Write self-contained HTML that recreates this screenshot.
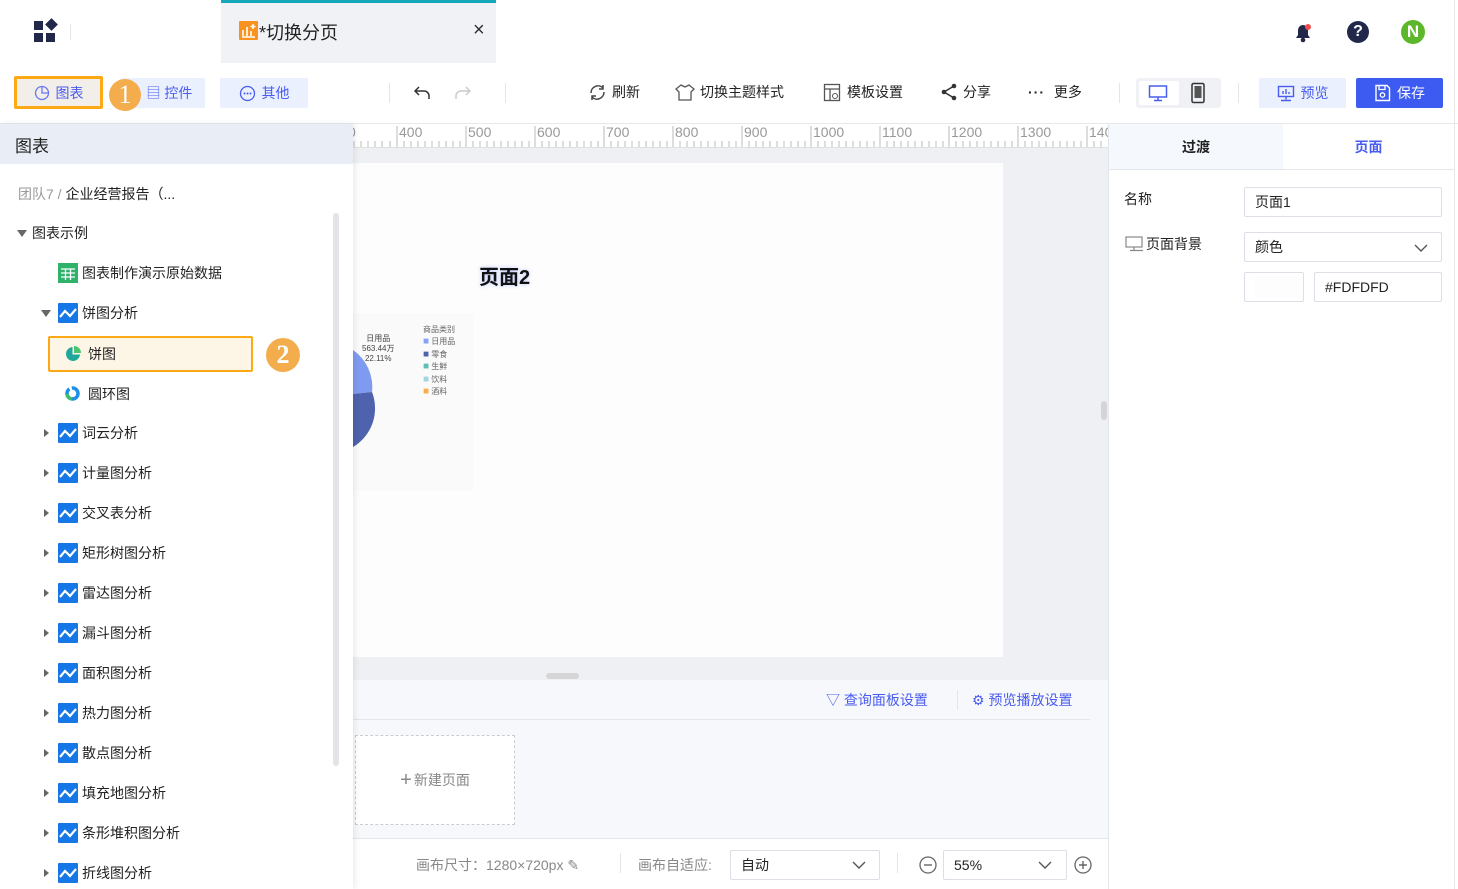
<!DOCTYPE html>
<html><head><meta charset="utf-8"><style>
*{margin:0;padding:0;box-sizing:border-box}
body{width:1458px;height:889px;overflow:hidden;background:#fff;font-family:"Liberation Sans","Noto Sans CJK SC",sans-serif;font-size:14px;color:#222;position:relative}
.a{position:absolute;white-space:nowrap}
.btn{position:absolute;top:78px;height:30px;border-radius:2px;background:#eaf0fe;color:#4a5cf0;font-size:14px;display:flex;align-items:center;justify-content:center;gap:6px;white-space:nowrap}
.tb{position:absolute;top:82px;font-size:14px;color:#222;display:flex;align-items:center;gap:5px;white-space:nowrap}
.row{position:absolute;left:0;width:330px;height:20px;font-size:14px;display:flex;align-items:center;color:#222;white-space:nowrap}
.row span{top:0;line-height:20px}
.tri{width:0;height:0;border-left:5px solid #666;border-top:4px solid transparent;border-bottom:4px solid transparent;position:absolute;left:44px;top:6px}
.wave{width:20px;height:20px;background:#1677e6;border-radius:1px;position:absolute;left:58px;top:0}
.ruler span{position:absolute;top:0;font-size:14px;color:#999}
.inp{position:absolute;border:1px solid #dcdfe6;border-radius:2px;background:#fff;font-size:14px;padding-left:10px;display:flex;align-items:center;white-space:nowrap}
</style></head><body>
<div class="a" style="left:34px;top:21px;width:22px;height:22px">
<div class="a" style="left:0;top:0;width:9px;height:9px;background:#22284a"></div>
<div class="a" style="left:13px;top:-1px;width:9px;height:9px;background:#22284a;transform:rotate(45deg)"></div>
<div class="a" style="left:0;top:12px;width:9px;height:9px;background:#22284a"></div>
<div class="a" style="left:12px;top:12px;width:9px;height:9px;background:#22284a"></div></div>
<div class="a" style="left:70px;top:24px;width:1px;height:16px;background:#e5e5e5"></div>
<div class="a" style="left:221px;top:0;width:275px;height:63px;background:#f0f2f6;border-top:3px solid #12a8b8"></div>
<div class="a" style="left:239px;top:21px;width:19px;height:19px;background:#f7931e;border-radius:1px"><svg width="19" height="19"><path d="M4 15V9M8 15V6M12 15V10M3 16h13" stroke="#fff" stroke-width="1.6" fill="none"/><path d="M14 3v5M11.5 5.5h5" stroke="#fff" stroke-width="1.6"/></svg></div>
<div class="a" style="left:259px;top:19px;font-size:18px;color:#222">*切换分页</div>
<div class="a" style="left:473px;top:19px;font-size:20px;color:#333">×</div>
<svg class="a" style="left:1292px;top:20px" width="22" height="24"><path d="M4 18h14l-2-3V10a5 5 0 0 0-10 0v5z" fill="#22284a"/><circle cx="11" cy="20" r="2.3" fill="#22284a"/><circle cx="16" cy="7" r="3" fill="#f04e4e"/></svg>
<div class="a" style="left:1347px;top:21px;width:22px;height:22px;border-radius:50%;background:#22284a;color:#fff;font-weight:bold;font-size:16px;text-align:center;line-height:22px">?</div>
<div class="a" style="left:1401px;top:20px;width:24px;height:24px;border-radius:50%;background:#5cb82a;color:#fff;font-weight:bold;font-size:17px;text-align:center;line-height:24px">N</div>
<div class="a" style="left:1454px;top:0;width:1px;height:889px;background:#e8e8e8"></div>
<div class="btn" style="left:14px;top:76px;width:89px;height:33px;background:#f2eeea;border:3px solid #fca915;color:#4a5cf0"><svg width="16" height="16"><circle cx="8" cy="8" r="6.5" stroke="#6a78f0" fill="none" stroke-width="1.3"/><path d="M8 1.5V8h6.5" stroke="#6a78f0" fill="none" stroke-width="1.3"/></svg>图表</div>
<div class="btn" style="left:120px;width:85px"><span style="margin-left:14px">▤ 控件</span></div>
<div class="a" style="left:109px;top:79px;width:32px;height:32px;border-radius:50%;background:#f4ad4c;color:#fff;font-family:'Liberation Serif',serif;font-size:26px;text-align:center;line-height:32px">1</div>
<div class="btn" style="left:220px;width:88px"><svg width="17" height="17"><circle cx="8.5" cy="8.5" r="7" stroke="#4a5cf0" fill="none" stroke-width="1.3"/><circle cx="5.5" cy="8.5" r="1" fill="#4a5cf0"/><circle cx="8.5" cy="8.5" r="1" fill="#4a5cf0"/><circle cx="11.5" cy="8.5" r="1" fill="#4a5cf0"/></svg>其他</div>
<div class="a" style="left:389px;top:83px;width:1px;height:20px;background:#e5e5e5"></div>
<svg class="a" style="left:413px;top:84px" width="20" height="18"><path d="M6 3L2 7l4 4M2 7h9a5 5 0 0 1 5 5v3" stroke="#333" fill="none" stroke-width="1.5"/></svg>
<svg class="a" style="left:452px;top:84px" width="20" height="18"><path d="M14 3l4 4-4 4M18 7H9a5 5 0 0 0-5 5v3" stroke="#ccc" fill="none" stroke-width="1.5"/></svg>
<div class="a" style="left:505px;top:83px;width:1px;height:20px;background:#e5e5e5"></div>
<div class="tb" style="left:588px"><svg width="19" height="19"><path d="M16 9a7 7 0 0 1-12 5M3 10a7 7 0 0 1 12-5" stroke="#444" fill="none" stroke-width="1.5"/><path d="M15 2v4h-4M4 17v-4h4" stroke="#444" fill="none" stroke-width="1.5"/></svg>刷新</div>
<div class="tb" style="left:675px"><svg width="20" height="19"><path d="M6 2l4 2 4-2 5 4-3 3v8H4V9L1 6z" stroke="#555" fill="none" stroke-width="1.3"/></svg>切换主题样式</div>
<div class="tb" style="left:823px"><svg width="19" height="19"><rect x="1.5" y="1.5" width="15" height="16" stroke="#555" fill="none" stroke-width="1.3"/><path d="M1.5 6h15M7 6v11" stroke="#555" stroke-width="1.3"/><circle cx="12" cy="13" r="2.5" stroke="#555" fill="none"/></svg>模板设置</div>
<div class="tb" style="left:940px"><svg width="18" height="18"><circle cx="14" cy="3" r="2.3" fill="#333"/><circle cx="4" cy="9" r="2.3" fill="#333"/><circle cx="14" cy="15" r="2.3" fill="#333"/><path d="M14 3L4 9l10 6" stroke="#333" fill="none" stroke-width="1.5"/></svg>分享</div>
<div class="tb" style="left:1028px"><b style="letter-spacing:1px">···</b>&nbsp;更多</div>
<div class="a" style="left:1119px;top:83px;width:1px;height:20px;background:#e5e5e5"></div>
<div class="a" style="left:1136px;top:78px;width:85px;height:30px;background:#f0f1f4;border-radius:3px"></div>
<div class="a" style="left:1139px;top:81px;width:40px;height:24px;background:#fff;border-radius:2px"></div>
<svg class="a" style="left:1148px;top:84px" width="20" height="18"><rect x="1.5" y="2" width="17" height="11" stroke="#4a5cf0" fill="none" stroke-width="1.5"/><path d="M10 13v3M6 16.5h8" stroke="#4a5cf0" stroke-width="1.5"/></svg>
<svg class="a" style="left:1190px;top:82px" width="16" height="22"><rect x="2" y="1.5" width="12" height="19" rx="1.5" stroke="#333" fill="none" stroke-width="1.5"/><rect x="4.5" y="4" width="7" height="12" fill="#555"/></svg>
<div class="a" style="left:1238px;top:83px;width:1px;height:20px;background:#e5e5e5"></div>
<div class="btn" style="left:1259px;width:87px"><svg width="18" height="17"><rect x="1.5" y="1.5" width="15" height="10" stroke="#4a5cf0" fill="none" stroke-width="1.4"/><path d="M9 11.5v3M4 15.5h10M6 9V6M9 9V4M12 9V7" stroke="#4a5cf0" stroke-width="1.4"/></svg>预览</div>
<div class="btn" style="left:1356px;width:87px;background:#3d5af1;color:#fff"><svg width="17" height="18"><path d="M2 1.5h11l2.5 2.5v12.5H2z" stroke="#fff" fill="none" stroke-width="1.4"/><path d="M5 1.5v4h6v-4" stroke="#fff" fill="none" stroke-width="1.3"/><circle cx="8.5" cy="11" r="2.2" stroke="#fff" fill="none" stroke-width="1.3"/></svg>保存</div>
<div class="a" style="left:0;top:123px;width:1458px;height:1px;background:#e8e8e8"></div>
<div class="a" style="left:353px;top:124px;width:755px;height:556px;background:#eef0f3"></div>
<div class="a ruler" style="left:353px;top:124px;width:755px;height:24px;background:#fff;border-bottom:1px solid #e0e0e0;overflow:hidden">
<svg class="a" style="left:0;top:0" width="755" height="24"><g stroke="#bbb" stroke-width="1">
<path d="M44 2v22M113 2v22M182 2v22M251 2v22M320 2v22M389 2v22M458 2v22M527 2v22M596 2v22M665 2v22M734 2v22"/>
<path d="M1 17v6M8 17v6M15 17v6M22 17v6M29 17v6M37 17v6M51 17v6M58 17v6M65 17v6M72 17v6M79 17v6M86 17v6M93 17v6M100 17v6M107 17v6M120 17v6M127 17v6M134 17v6M141 17v6M148 17v6M155 17v6M162 17v6M169 17v6M176 17v6M189 17v6M196 17v6M203 17v6M210 17v6M217 17v6M224 17v6M231 17v6M238 17v6M245 17v6M258 17v6M265 17v6M272 17v6M279 17v6M286 17v6M293 17v6M300 17v6M307 17v6M314 17v6M327 17v6M334 17v6M341 17v6M348 17v6M355 17v6M362 17v6M369 17v6M376 17v6M383 17v6M396 17v6M403 17v6M410 17v6M417 17v6M424 17v6M431 17v6M438 17v6M445 17v6M452 17v6M465 17v6M472 17v6M479 17v6M486 17v6M493 17v6M500 17v6M507 17v6M514 17v6M521 17v6M534 17v6M541 17v6M548 17v6M555 17v6M562 17v6M569 17v6M576 17v6M583 17v6M590 17v6M603 17v6M610 17v6M617 17v6M624 17v6M631 17v6M638 17v6M645 17v6M652 17v6M659 17v6M672 17v6M679 17v6M686 17v6M693 17v6M700 17v6M707 17v6M714 17v6M721 17v6M728 17v6M741 17v6M748 17v6"/></g></svg>
<span style="left:-5px">0</span><span style="left:46px">400</span><span style="left:115px">500</span><span style="left:184px">600</span><span style="left:253px">700</span><span style="left:322px">800</span><span style="left:391px">900</span><span style="left:460px">1000</span><span style="left:529px">1100</span><span style="left:598px">1200</span><span style="left:667px">1300</span><span style="left:736px">1400</span></div>
<div class="a" style="left:353px;top:163px;width:650px;height:494px;background:#fdfdfd"></div>
<div class="a" style="left:479px;top:261px;font-size:20px;font-weight:bold;color:#111;text-shadow:0 0 4px #b9c4ff">页面2</div>
<div class="a" style="left:353px;top:313px;width:120px;height:178px;background:#fafafb"></div>
<svg class="a" style="left:353px;top:350px" width="25" height="100"><path d="M0 0A45 45 0 0 1 19 42L0 44z" fill="#7f9bf0"/><path d="M0 44L19 42A45 45 0 0 1 0 97z" fill="#4e62ad"/></svg>
<div class="a" style="left:362px;top:334px;font-size:8px;color:#444;text-align:center;line-height:10px">日用品<br>563.44万<br>22.11%</div>
<div class="a" style="left:423px;top:324px;font-size:8px;color:#666;line-height:12.4px">商品类别<br><span style="color:#86a3f5;font-size:10px">■</span> 日用品<br><span style="color:#4e62ad;font-size:10px">■</span> 零食<br><span style="color:#5fbfb3;font-size:10px">■</span> 生鲜<br><span style="color:#9fd6e0;font-size:10px">■</span> 饮料<br><span style="color:#f9ad4a;font-size:10px">■</span> 酒料</div>
<div class="a" style="left:546px;top:673px;width:33px;height:6px;border-radius:3px;background:#d5d5d8"></div>
<div class="a" style="left:1101px;top:401px;width:6px;height:19px;border-radius:3px;background:#d5d5d8"></div>
<div class="a" style="left:353px;top:680px;width:755px;height:158px;background:#f6f8fb"></div>
<div class="a" style="left:353px;top:719px;width:737px;height:1px;background:#e3e6eb"></div>
<div class="a" style="left:826px;top:690px;font-size:14px;color:#4a5cf0">▽ 查询面板设置</div>
<div class="a" style="left:957px;top:690px;width:1px;height:20px;background:#e3e6eb"></div>
<div class="a" style="left:972px;top:690px;font-size:14px;color:#4a5cf0">⚙ 预览播放设置</div>
<div class="a" style="left:355px;top:735px;width:160px;height:90px;border:1px dashed #ccc;background:#fff;display:flex;align-items:center;justify-content:center;color:#888;font-size:14px"><span style="font-size:20px;font-weight:200;margin-right:2px">+</span>新建页面</div>
<div class="a" style="left:353px;top:838px;width:755px;height:1px;background:#e3e6eb"></div>
<div class="a" style="left:416px;top:855px;color:#888;font-size:14px">画布尺寸：1280×720px ✎</div>
<div class="a" style="left:620px;top:853px;width:1px;height:20px;background:#e5e5e5"></div>
<div class="a" style="left:638px;top:855px;color:#888">画布自适应:</div>
<div class="inp" style="left:730px;top:850px;width:150px;height:30px">自动<svg class="a" style="left:120px;top:9px" width="16" height="10"><path d="M2 2l6 6 6-6" stroke="#555" fill="none" stroke-width="1.4"/></svg></div>
<div class="a" style="left:897px;top:853px;width:1px;height:20px;background:#e5e5e5"></div>
<svg class="a" style="left:918px;top:855px" width="20" height="20"><circle cx="10" cy="10" r="8" stroke="#666" fill="none" stroke-width="1.3"/><path d="M6 10h8" stroke="#666" stroke-width="1.4"/></svg>
<div class="inp" style="left:943px;top:850px;width:124px;height:30px">55%<svg class="a" style="left:93px;top:9px" width="16" height="10"><path d="M2 2l6 6 6-6" stroke="#555" fill="none" stroke-width="1.4"/></svg></div>
<svg class="a" style="left:1073px;top:855px" width="20" height="20"><circle cx="10" cy="10" r="8" stroke="#666" fill="none" stroke-width="1.3"/><path d="M6 10h8M10 6v8" stroke="#666" stroke-width="1.4"/></svg>
<div class="a" style="left:0;top:124px;width:353px;height:765px;background:#fff;box-shadow:2px 0 6px rgba(0,0,0,.08)"></div>
<div class="a" style="left:0;top:124px;width:353px;height:40px;background:#e9eef6;font-size:17px;padding:8px 0 0 15px">图表</div>
<div class="a" style="left:18px;top:184px;font-size:14px;color:#999">团队7 / <span style="color:#222">企业经营报告（...</span></div>
<div class="a" style="left:333px;top:213px;width:6px;height:553px;border-radius:3px;background:#e3e3e8"></div>
<div class="row" style="top:223px"><div class="tri" style="left:17px;top:7px;border-left:5px solid transparent;border-right:5px solid transparent;border-top:7px solid #666;border-bottom:0"></div><span class="a" style="left:32px">图表示例</span></div>
<div class="row" style="top:263px"><svg class="a" style="left:58px;top:0" width="20" height="20"><rect width="20" height="20" fill="#2fb36b"/><path d="M3 6h14M3 10h14M3 14h14M7.5 6v11M12.5 6v11" stroke="#fff" stroke-width="1.3"/></svg><span class="a" style="left:82px">图表制作演示原始数据</span></div>
<div class="row" style="top:303px"><div class="tri" style="left:41px;top:7px;border-left:5px solid transparent;border-right:5px solid transparent;border-top:7px solid #666;border-bottom:0"></div><svg class="wave" width="20" height="20"><path d="M2 14l5-6 5 5 6-7" stroke="#fff" fill="none" stroke-width="2.2"/></svg><span class="a" style="left:82px">饼图分析</span></div>
<div class="a" style="left:48px;top:336px;width:205px;height:36px;background:#fdf6e6;border:2px solid #fca915;border-radius:2px"></div>
<svg class="a" style="left:65px;top:345px" width="17" height="17"><path d="M7.5 2A7 7 0 1 0 15 9.5H7.5z" fill="#1fa79c"/><path d="M9 1v7h7A7 7 0 0 0 9 1z" fill="#4cc36e"/></svg>
<div class="a" style="left:88px;top:344px">饼图</div>
<div class="a" style="left:266px;top:338px;width:34px;height:34px;border-radius:50%;background:#f4ad4c;color:#fff;font-family:'Liberation Serif',serif;font-size:26px;font-weight:bold;text-align:center;line-height:34px">2</div>
<svg class="a" style="left:64px;top:385px" width="17" height="17"><circle cx="8.5" cy="8.5" r="5.5" fill="none" stroke="#1e90e8" stroke-width="3.5" stroke-dasharray="10 2.5"/><path d="M3 9a5.5 5.5 0 0 0 5 5" stroke="#3bbf6a" stroke-width="3.5" fill="none"/></svg>
<div class="a" style="left:88px;top:384px">圆环图</div>
<div class="row" style="top:423px"><div class="tri"></div><svg class="wave" width="20" height="20"><path d="M2 14l5-6 5 5 6-7" stroke="#fff" fill="none" stroke-width="2.2"/></svg><span class="a" style="left:82px">词云分析</span></div>
<div class="row" style="top:463px"><div class="tri"></div><svg class="wave" width="20" height="20"><path d="M2 14l5-6 5 5 6-7" stroke="#fff" fill="none" stroke-width="2.2"/></svg><span class="a" style="left:82px">计量图分析</span></div>
<div class="row" style="top:503px"><div class="tri"></div><svg class="wave" width="20" height="20"><path d="M2 14l5-6 5 5 6-7" stroke="#fff" fill="none" stroke-width="2.2"/></svg><span class="a" style="left:82px">交叉表分析</span></div>
<div class="row" style="top:543px"><div class="tri"></div><svg class="wave" width="20" height="20"><path d="M2 14l5-6 5 5 6-7" stroke="#fff" fill="none" stroke-width="2.2"/></svg><span class="a" style="left:82px">矩形树图分析</span></div>
<div class="row" style="top:583px"><div class="tri"></div><svg class="wave" width="20" height="20"><path d="M2 14l5-6 5 5 6-7" stroke="#fff" fill="none" stroke-width="2.2"/></svg><span class="a" style="left:82px">雷达图分析</span></div>
<div class="row" style="top:623px"><div class="tri"></div><svg class="wave" width="20" height="20"><path d="M2 14l5-6 5 5 6-7" stroke="#fff" fill="none" stroke-width="2.2"/></svg><span class="a" style="left:82px">漏斗图分析</span></div>
<div class="row" style="top:663px"><div class="tri"></div><svg class="wave" width="20" height="20"><path d="M2 14l5-6 5 5 6-7" stroke="#fff" fill="none" stroke-width="2.2"/></svg><span class="a" style="left:82px">面积图分析</span></div>
<div class="row" style="top:703px"><div class="tri"></div><svg class="wave" width="20" height="20"><path d="M2 14l5-6 5 5 6-7" stroke="#fff" fill="none" stroke-width="2.2"/></svg><span class="a" style="left:82px">热力图分析</span></div>
<div class="row" style="top:743px"><div class="tri"></div><svg class="wave" width="20" height="20"><path d="M2 14l5-6 5 5 6-7" stroke="#fff" fill="none" stroke-width="2.2"/></svg><span class="a" style="left:82px">散点图分析</span></div>
<div class="row" style="top:783px"><div class="tri"></div><svg class="wave" width="20" height="20"><path d="M2 14l5-6 5 5 6-7" stroke="#fff" fill="none" stroke-width="2.2"/></svg><span class="a" style="left:82px">填充地图分析</span></div>
<div class="row" style="top:823px"><div class="tri"></div><svg class="wave" width="20" height="20"><path d="M2 14l5-6 5 5 6-7" stroke="#fff" fill="none" stroke-width="2.2"/></svg><span class="a" style="left:82px">条形堆积图分析</span></div>
<div class="row" style="top:863px"><div class="tri"></div><svg class="wave" width="20" height="20"><path d="M2 14l5-6 5 5 6-7" stroke="#fff" fill="none" stroke-width="2.2"/></svg><span class="a" style="left:82px">折线图分析</span></div>
<div class="a" style="left:1108px;top:124px;width:1px;height:765px;background:#e3e6eb"></div>
<div class="a" style="left:1109px;top:124px;width:174px;height:46px;background:#f5f8fc;border-bottom:1px solid #e3e6eb;font-weight:bold;font-size:14px;text-align:center;line-height:46px">过渡</div>
<div class="a" style="left:1283px;top:124px;width:171px;height:46px;border-bottom:1px solid #e3e6eb;font-weight:bold;color:#4a5cf0;font-size:14px;text-align:center;line-height:46px">页面</div>
<div class="a" style="left:1124px;top:189px">名称</div>
<div class="inp" style="left:1244px;top:187px;width:198px;height:30px">页面1</div>
<svg class="a" style="left:1125px;top:236px" width="18" height="16"><rect x="1" y="1" width="16" height="10" stroke="#888" fill="none" stroke-width="1.2"/><path d="M9 11v3M5 14.5h13" stroke="#888" stroke-width="1.2"/></svg>
<div class="a" style="left:1146px;top:234px">页面背景</div>
<div class="inp" style="left:1244px;top:232px;width:198px;height:30px">颜色<svg class="a" style="left:168px;top:10px" width="16" height="10"><path d="M2 2l6 6 6-6" stroke="#555" fill="none" stroke-width="1.4"/></svg></div>
<div class="inp" style="left:1244px;top:272px;width:60px;height:30px"><div style="width:48px;height:22px;background:#fdfdfd"></div></div>
<div class="inp" style="left:1314px;top:272px;width:128px;height:30px">#FDFDFD</div>
</body></html>
